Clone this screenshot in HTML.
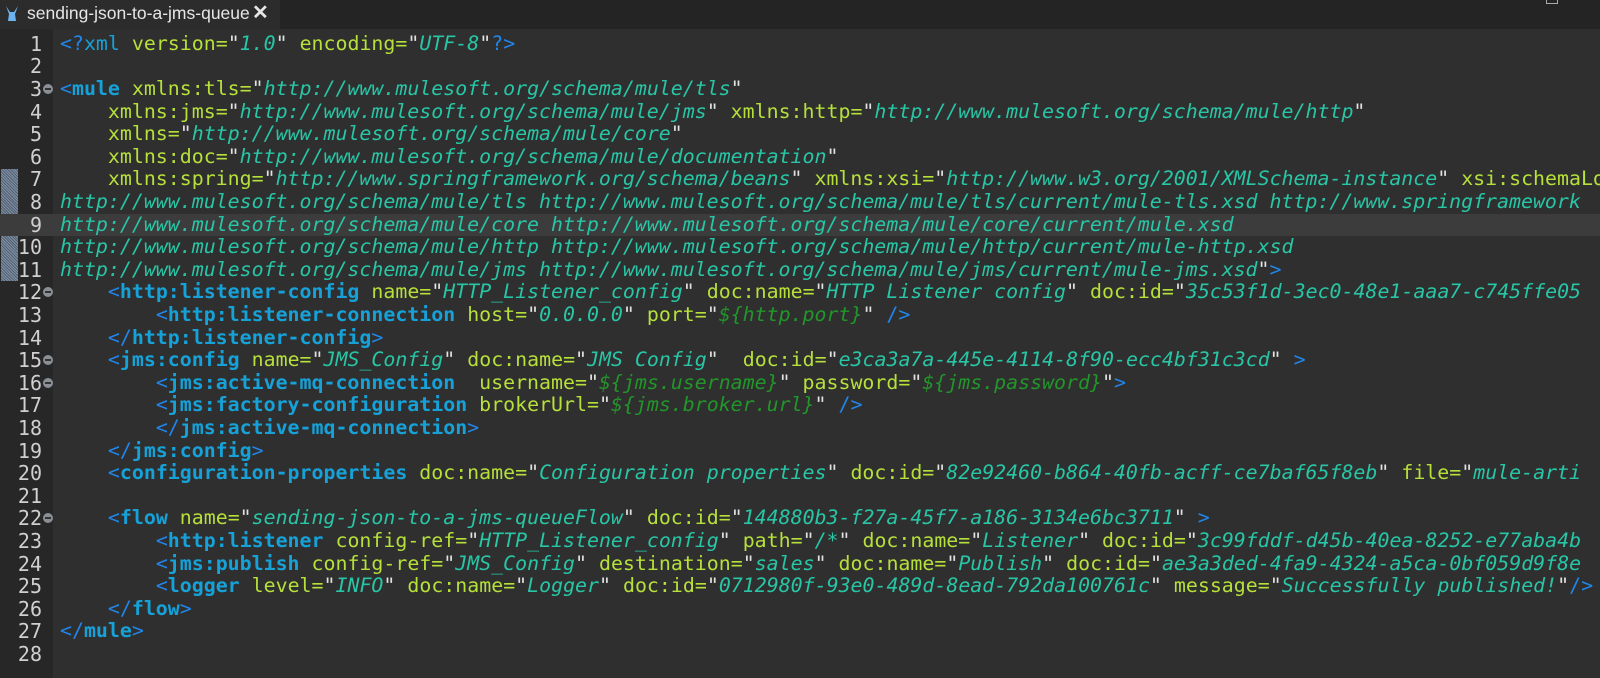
<!DOCTYPE html>
<html><head><meta charset="utf-8"><style>
body{margin:0;width:1600px;height:678px;overflow:hidden;background:#2f2f2f;font-family:"DejaVu Sans Mono","Liberation Mono",monospace;}
#tabbar{position:absolute;left:0;top:0;width:1600px;height:29px;background:#242424;}
#tab{position:absolute;left:0;top:0;width:280px;height:29px;background:#2c2c2c;color:#e6e6e6;font-family:"Liberation Sans",sans-serif;font-size:17.5px;line-height:26px;}
#gut{position:absolute;left:0;top:29px;width:53px;height:649px;background:#272727;}
#ed{position:absolute;left:0;top:0;width:1600px;height:678px;overflow:hidden;}
.l{position:absolute;left:0;width:1600px;height:22.6px;line-height:22.6px;white-space:pre;font-size:19.9px;color:#dcdcdc;}
.n{position:absolute;left:0;width:42px;text-align:right;color:#d0d0d0;font-size:20px;}
.c{position:absolute;left:60px;}
.hl{background:#3c3c3c;}
.f{position:absolute;left:43px;top:6px;width:10px;height:10px;border-radius:50%;background:#8a8f96;}
.f:after{content:"";position:absolute;left:2px;top:4px;width:6px;height:2px;background:#333;}
.b{color:#2186ea}.t{color:#16a2d8;font-weight:bold}.a{color:#b6e03a}.s{color:#28c6a6;font-style:italic}.g{color:#22962a;font-style:italic}.q{color:#e2e2e2}.e{color:#b6e03a}
.l:nth-child(1){top:32.7px}.l:nth-child(2){top:55.3px}.l:nth-child(3){top:77.9px}.l:nth-child(4){top:100.5px}.l:nth-child(5){top:123.1px}.l:nth-child(6){top:145.7px}.l:nth-child(7){top:168.3px}.l:nth-child(8){top:190.9px}.l:nth-child(9){top:213.5px}.l:nth-child(10){top:236.1px}.l:nth-child(11){top:258.7px}.l:nth-child(12){top:281.3px}.l:nth-child(13){top:303.9px}.l:nth-child(14){top:326.5px}.l:nth-child(15){top:349.1px}.l:nth-child(16){top:371.7px}.l:nth-child(17){top:394.3px}.l:nth-child(18){top:416.9px}.l:nth-child(19){top:439.5px}.l:nth-child(20){top:462.1px}.l:nth-child(21){top:484.7px}.l:nth-child(22){top:507.3px}.l:nth-child(23){top:529.9px}.l:nth-child(24){top:552.5px}.l:nth-child(25){top:575.1px}.l:nth-child(26){top:597.7px}.l:nth-child(27){top:620.3px}.l:nth-child(28){top:642.9px}
</style></head><body>
<div id="tabbar"><div id="tab"><svg style="position:absolute;left:5px;top:5px" width="14" height="18" viewBox="0 0 14 18"><path d="M1 1 L4 9 L3 16 L11 16 L10 9 L13 1 L9 7 L5 7 Z" fill="#6cb4f0"/></svg><span style="position:absolute;left:27px;top:0px">sending-json-to-a-jms-queue</span><span style="position:absolute;left:252px;top:0px;font-size:20px;font-weight:bold">✕</span></div>
<div style="position:absolute;left:1546px;top:-6px;width:10px;height:8px;border:1px solid #aaa"></div></div>
<div id="gut"><div style="position:absolute;left:1px;top:140px;width:17px;height:112px;background:repeating-linear-gradient(45deg,#7d8fa8 0 1px,#55606e 1px 2px);"></div></div>
<div id="ed">
<div class="l"><span class="n">1</span><span class="c"><span class="b">&lt;?</span><span class="t" style="font-weight:normal">xml</span> <span class="a">version</span><span class="e">=</span><span class="q">"</span><span class="s">1.0</span><span class="q">"</span> <span class="a">encoding</span><span class="e">=</span><span class="q">"</span><span class="s">UTF-8</span><span class="q">"</span><span class="b">?&gt;</span></span></div>
<div class="l"><span class="n">2</span></div>
<div class="l"><span class="n">3</span><span class="f"></span><span class="c"><span class="b">&lt;</span><span class="t">mule</span> <span class="a">xmlns:tls</span><span class="e">=</span><span class="q">"</span><span class="s">http://www.mulesoft.org/schema/mule/tls</span><span class="q">"</span></span></div>
<div class="l"><span class="n">4</span><span class="c">    <span class="a">xmlns:jms</span><span class="e">=</span><span class="q">"</span><span class="s">http://www.mulesoft.org/schema/mule/jms</span><span class="q">"</span> <span class="a">xmlns:http</span><span class="e">=</span><span class="q">"</span><span class="s">http://www.mulesoft.org/schema/mule/http</span><span class="q">"</span></span></div>
<div class="l"><span class="n">5</span><span class="c">    <span class="a">xmlns</span><span class="e">=</span><span class="q">"</span><span class="s">http://www.mulesoft.org/schema/mule/core</span><span class="q">"</span></span></div>
<div class="l"><span class="n">6</span><span class="c">    <span class="a">xmlns:doc</span><span class="e">=</span><span class="q">"</span><span class="s">http://www.mulesoft.org/schema/mule/documentation</span><span class="q">"</span></span></div>
<div class="l"><span class="n">7</span><span class="c">    <span class="a">xmlns:spring</span><span class="e">=</span><span class="q">"</span><span class="s">http://www.springframework.org/schema/beans</span><span class="q">"</span> <span class="a">xmlns:xsi</span><span class="e">=</span><span class="q">"</span><span class="s">http://www.w3.org/2001/XMLSchema-instance</span><span class="q">"</span> <span class="a">xsi:schemaLocation</span></span></div>
<div class="l"><span class="n">8</span><span class="c"><span class="s">http://www.mulesoft.org/schema/mule/tls http://www.mulesoft.org/schema/mule/tls/current/mule-tls.xsd http://www.springframework</span></span></div>
<div class="l hl"><span class="n">9</span><span class="c"><span class="s">http://www.mulesoft.org/schema/mule/core http://www.mulesoft.org/schema/mule/core/current/mule.xsd</span></span></div>
<div class="l"><span class="n">10</span><span class="c"><span class="s">http://www.mulesoft.org/schema/mule/http http://www.mulesoft.org/schema/mule/http/current/mule-http.xsd</span></span></div>
<div class="l"><span class="n">11</span><span class="c"><span class="s">http://www.mulesoft.org/schema/mule/jms http://www.mulesoft.org/schema/mule/jms/current/mule-jms.xsd</span><span class="q">"</span><span class="b">&gt;</span></span></div>
<div class="l"><span class="n">12</span><span class="f"></span><span class="c">    <span class="b">&lt;</span><span class="t">http:listener-config</span> <span class="a">name</span><span class="e">=</span><span class="q">"</span><span class="s">HTTP_Listener_config</span><span class="q">"</span> <span class="a">doc:name</span><span class="e">=</span><span class="q">"</span><span class="s">HTTP Listener config</span><span class="q">"</span> <span class="a">doc:id</span><span class="e">=</span><span class="q">"</span><span class="s">35c53f1d-3ec0-48e1-aaa7-c745ffe05</span></span></div>
<div class="l"><span class="n">13</span><span class="c">        <span class="b">&lt;</span><span class="t">http:listener-connection</span> <span class="a">host</span><span class="e">=</span><span class="q">"</span><span class="s">0.0.0.0</span><span class="q">"</span> <span class="a">port</span><span class="e">=</span><span class="q">"</span><span class="g">${http.port}</span><span class="q">"</span> <span class="b">/&gt;</span></span></div>
<div class="l"><span class="n">14</span><span class="c">    <span class="b">&lt;/</span><span class="t">http:listener-config</span><span class="b">&gt;</span></span></div>
<div class="l"><span class="n">15</span><span class="f"></span><span class="c">    <span class="b">&lt;</span><span class="t">jms:config</span> <span class="a">name</span><span class="e">=</span><span class="q">"</span><span class="s">JMS_Config</span><span class="q">"</span> <span class="a">doc:name</span><span class="e">=</span><span class="q">"</span><span class="s">JMS Config</span><span class="q">"</span>  <span class="a">doc:id</span><span class="e">=</span><span class="q">"</span><span class="s">e3ca3a7a-445e-4114-8f90-ecc4bf31c3cd</span><span class="q">"</span> <span class="b">&gt;</span></span></div>
<div class="l"><span class="n">16</span><span class="f"></span><span class="c">        <span class="b">&lt;</span><span class="t">jms:active-mq-connection</span>  <span class="a">username</span><span class="e">=</span><span class="q">"</span><span class="g">${jms.username}</span><span class="q">"</span> <span class="a">password</span><span class="e">=</span><span class="q">"</span><span class="g">${jms.password}</span><span class="q">"</span><span class="b">&gt;</span></span></div>
<div class="l"><span class="n">17</span><span class="c">        <span class="b">&lt;</span><span class="t">jms:factory-configuration</span> <span class="a">brokerUrl</span><span class="e">=</span><span class="q">"</span><span class="g">${jms.broker.url}</span><span class="q">"</span> <span class="b">/&gt;</span></span></div>
<div class="l"><span class="n">18</span><span class="c">        <span class="b">&lt;/</span><span class="t">jms:active-mq-connection</span><span class="b">&gt;</span></span></div>
<div class="l"><span class="n">19</span><span class="c">    <span class="b">&lt;/</span><span class="t">jms:config</span><span class="b">&gt;</span></span></div>
<div class="l"><span class="n">20</span><span class="c">    <span class="b">&lt;</span><span class="t">configuration-properties</span> <span class="a">doc:name</span><span class="e">=</span><span class="q">"</span><span class="s">Configuration properties</span><span class="q">"</span> <span class="a">doc:id</span><span class="e">=</span><span class="q">"</span><span class="s">82e92460-b864-40fb-acff-ce7baf65f8eb</span><span class="q">"</span> <span class="a">file</span><span class="e">=</span><span class="q">"</span><span class="s">mule-arti</span></span></div>
<div class="l"><span class="n">21</span></div>
<div class="l"><span class="n">22</span><span class="f"></span><span class="c">    <span class="b">&lt;</span><span class="t">flow</span> <span class="a">name</span><span class="e">=</span><span class="q">"</span><span class="s">sending-json-to-a-jms-queueFlow</span><span class="q">"</span> <span class="a">doc:id</span><span class="e">=</span><span class="q">"</span><span class="s">144880b3-f27a-45f7-a186-3134e6bc3711</span><span class="q">"</span> <span class="b">&gt;</span></span></div>
<div class="l"><span class="n">23</span><span class="c">        <span class="b">&lt;</span><span class="t">http:listener</span> <span class="a">config-ref</span><span class="e">=</span><span class="q">"</span><span class="s">HTTP_Listener_config</span><span class="q">"</span> <span class="a">path</span><span class="e">=</span><span class="q">"</span><span class="s">/*</span><span class="q">"</span> <span class="a">doc:name</span><span class="e">=</span><span class="q">"</span><span class="s">Listener</span><span class="q">"</span> <span class="a">doc:id</span><span class="e">=</span><span class="q">"</span><span class="s">3c99fddf-d45b-40ea-8252-e77aba4b</span></span></div>
<div class="l"><span class="n">24</span><span class="c">        <span class="b">&lt;</span><span class="t">jms:publish</span> <span class="a">config-ref</span><span class="e">=</span><span class="q">"</span><span class="s">JMS_Config</span><span class="q">"</span> <span class="a">destination</span><span class="e">=</span><span class="q">"</span><span class="s">sales</span><span class="q">"</span> <span class="a">doc:name</span><span class="e">=</span><span class="q">"</span><span class="s">Publish</span><span class="q">"</span> <span class="a">doc:id</span><span class="e">=</span><span class="q">"</span><span class="s">ae3a3ded-4fa9-4324-a5ca-0bf059d9f8e</span></span></div>
<div class="l"><span class="n">25</span><span class="c">        <span class="b">&lt;</span><span class="t">logger</span> <span class="a">level</span><span class="e">=</span><span class="q">"</span><span class="s">INFO</span><span class="q">"</span> <span class="a">doc:name</span><span class="e">=</span><span class="q">"</span><span class="s">Logger</span><span class="q">"</span> <span class="a">doc:id</span><span class="e">=</span><span class="q">"</span><span class="s">0712980f-93e0-489d-8ead-792da100761c</span><span class="q">"</span> <span class="a">message</span><span class="e">=</span><span class="q">"</span><span class="s">Successfully published!</span><span class="q">"</span><span class="b">/&gt;</span></span></div>
<div class="l"><span class="n">26</span><span class="c">    <span class="b">&lt;/</span><span class="t">flow</span><span class="b">&gt;</span></span></div>
<div class="l"><span class="n">27</span><span class="c"><span class="b">&lt;/</span><span class="t">mule</span><span class="b">&gt;</span></span></div>
<div class="l"><span class="n">28</span></div>
</div>
</body></html>
